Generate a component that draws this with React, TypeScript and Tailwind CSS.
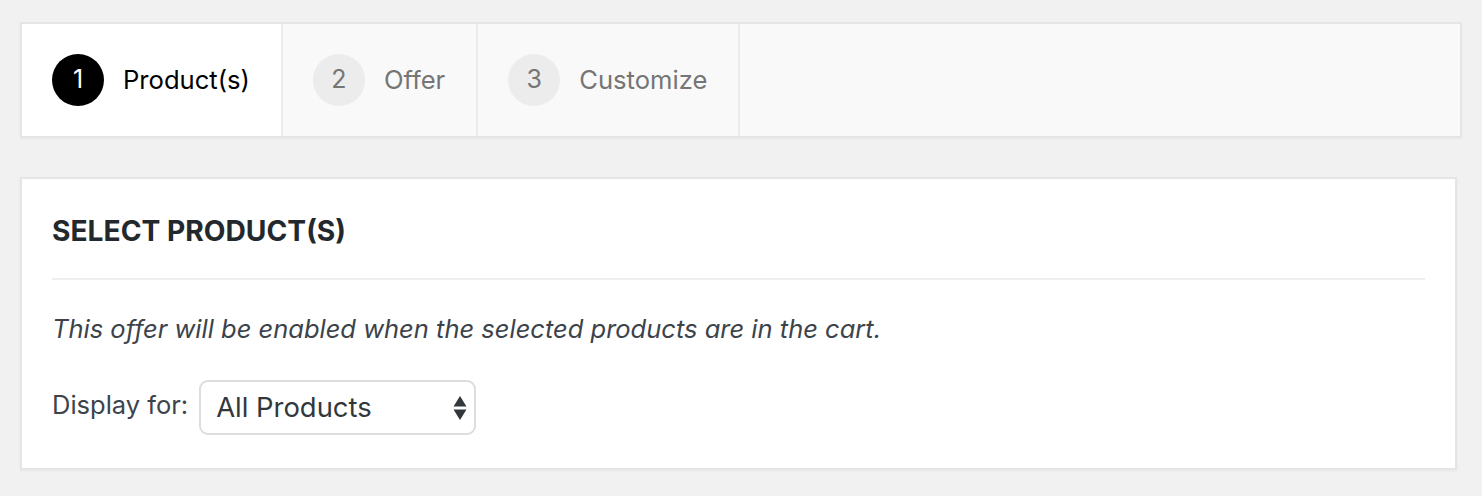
import React from "react";

const font = { fontFamily: "Inter, 'Noto Sans', 'Liberation Sans', sans-serif" };

function Step({ n, label, active }: { n: number; label: string; active?: boolean }) {
  return (
    <div
      className={`flex items-center h-[112px] pl-[30px] pr-[31px] border-r-2 border-[#ececec] ${
        active ? "bg-white" : "bg-[#f9f9f9]"
      }`}
    >
      <div
        className={`w-[52px] h-[52px] rounded-full flex items-center justify-center text-[25px] ${
          active ? "bg-black text-white" : "bg-[#ececec] text-[#757575]"
        }`}
      >
        {n}
      </div>
      <div className={`ml-[19px] text-[25.6px] ${active ? "text-black" : "text-[#757575]"}`}>{label}</div>
    </div>
  );
}

export default function App() {
  return (
    <div className="min-h-[496px] bg-[#f1f1f1] pt-[22px] pb-[27px]" style={font}>
      <div className="ml-[20px] mr-[20px] flex border-2 border-[#e5e5e5] bg-[#f9f9f9] shadow-[0_1px_2px_rgba(0,0,0,0.05)]">
        <Step n={1} label="Product(s)" active />
        <Step n={2} label="Offer" />
        <Step n={3} label="Customize" />
      </div>

      <div className="ml-[20px] mr-[25px] mt-[39px] border-2 border-[#e5e5e5] bg-white px-[30px] pt-[34px] pb-[33px] shadow-[0_1px_2px_rgba(0,0,0,0.05)]">
        <h2 className="text-[28.2px] font-bold text-[#23282d] leading-[36px]">SELECT PRODUCT(S)</h2>
        <div className="mt-[29px] h-[2px] bg-[#eeeeee]" />
        <p className="mt-[32px] text-[25.5px] italic text-[#3c434a] leading-[34px]">
          This offer will be enabled when the selected products are in the cart.
        </p>
        <div className="mt-[34px] flex items-center">
          <span className="text-[25.5px] text-[#3c434a] mr-[11px] -mt-[4px]">Display for:</span>
          <div className="relative w-[277px] h-[55px] rounded-[9px] border-2 border-[#dddddd] bg-white flex items-center pl-[15px]">
            <span className="text-[27.4px] text-[#32373c]">All Products</span>
            <svg className="absolute right-[7px] top-1/2 -translate-y-1/2" width="14" height="25" viewBox="0 0 14 25">
              <path d="M7 0.5 L13.5 11 L0.5 11 Z" fill="#32373c" />
              <path d="M0.5 14 L13.5 14 L7 24.5 Z" fill="#32373c" />
            </svg>
          </div>
        </div>
      </div>
    </div>
  );
}
